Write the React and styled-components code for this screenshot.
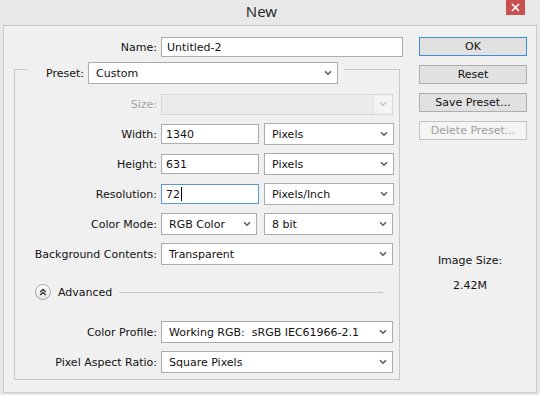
import React from "react";
import styled, { createGlobalStyle } from "styled-components";

const Global = createGlobalStyle`
  html, body { margin: 0; padding: 0; }
  body { background: #e8e8e8; }
`;

const FONT = `"DejaVu Sans", Verdana, sans-serif`;

const Window = styled.div`
  width: 540px;
  height: 395px;
  background: #e8e8e8;
  display: flex;
  flex-direction: column;
  font-family: ${FONT};
  font-size: 11px;
  color: #111;
  overflow: hidden;
`;

const TitleBar = styled.div`
  height: 25px;
  flex: none;
  display: grid;
  grid-template-columns: 1fr auto 1fr;
  align-items: start;
`;

const Title = styled.div`
  grid-column: 2;
  padding-right: 17px;
  font-family: "Noto Sans", sans-serif;
  font-size: 15px;
  line-height: 22px;
  color: #2b2b2b;
`;

const CloseButton = styled.div`
  grid-column: 3;
  justify-self: end;
  width: 19px;
  height: 15px;
  margin-right: 15px;
  background: #c75050;
  display: flex;
  align-items: center;
  justify-content: center;
`;

const Body = styled.div`
  flex: 1;
  margin: 0 3px 2px 3px;
  border: 1px solid #c9c9c9;
  background: #f0f0f0;
  display: grid;
  grid-template-columns: 399px 1fr;
`;

const LeftCol = styled.div`
  padding-top: 11px;
  display: flex;
  flex-direction: column;
`;

const NameRow = styled.div`
  display: grid;
  grid-template-columns: 153px 242px;
  column-gap: 4px;
  align-items: center;
  height: 20px;
`;

const Label = styled.div`
  text-align: right;
  white-space: nowrap;
  color: ${(p) => (p.$disabled ? "#a3a3a3" : "#111")};
`;

const TextField = styled.div`
  box-sizing: border-box;
  height: 20px;
  width: ${(p) => p.$w || "100%"};
  border: 1px solid ${(p) => (p.$focused ? "#5a9ad8" : "#acacac")};
  background: #fff;
  padding-left: ${(p) => p.$pad || 4}px;
  display: flex;
  align-items: center;
  white-space: nowrap;
`;

const Caret = styled.span`
  display: inline-block;
  width: 1px;
  height: 14px;
  background: #000;
  margin-left: 1px;
`;

const SelectBox = styled.div`
  box-sizing: border-box;
  height: ${(p) => p.$h || 22}px;
  width: ${(p) => p.$w || "100%"};
  border: 1px solid ${(p) => (p.$disabled ? "#d6d6d6" : "#acacac")};
  background: ${(p) => (p.$disabled ? "#ebebeb" : "#fff")};
  display: flex;
  align-items: center;
  padding-left: 7px;
  white-space: nowrap;
`;

const SelectText = styled.div`
  flex: 1;
  overflow: hidden;
`;

const ArrowArea = styled.div`
  width: 18px;
  align-self: stretch;
  display: flex;
  align-items: center;
  justify-content: center;
  background: ${(p) => (p.$disabled ? "#f4f4f4" : "transparent")};
  border-left: ${(p) => (p.$disabled ? "1px solid #e2e2e2" : "none")};
`;

const Chevron = ({ color = "#5c5c5c" }) => (
  <svg width="8" height="6" viewBox="0 0 8 6">
    <path d="M1 1.2 L4 4.2 L7 1.2" fill="none" stroke={color} strokeWidth="1.6" />
  </svg>
);

const Select = ({ children, w, h, disabled }) => (
  <SelectBox $w={w} $h={h} $disabled={disabled}>
    <SelectText>{children}</SelectText>
    <ArrowArea $disabled={disabled}>
      <Chevron color={disabled ? "#c4c4c4" : "#5c5c5c"} />
    </ArrowArea>
  </SelectBox>
);

const Group = styled.div`
  box-sizing: border-box;
  margin: 12px 0 0 10px;
  width: 386px;
  height: 311px;
  border: 1px solid #c8c8c8;
  display: flex;
  flex-direction: column;
  padding: 0 6px 0 0;
`;

const GroupHeader = styled.div`
  align-self: flex-start;
  margin: -8px 0 0 12px;
  padding: 0 6px 0 19px;
  background: #f0f0f0;
  display: flex;
  align-items: center;
  gap: 4px;
`;

const Rows = styled.div`
  display: flex;
  flex-direction: column;
  gap: 8px;
  margin-top: ${(p) => p.$top || 0}px;
`;

const Row = styled.div`
  display: grid;
  grid-template-columns: 142px 1fr;
  column-gap: 4px;
  align-items: center;
  height: 22px;
`;

const Pair = styled.div`
  display: flex;
  align-items: center;
  gap: ${(p) => p.$gap || 5}px;
`;

const AdvancedRow = styled.div`
  display: flex;
  align-items: center;
  height: 20px;
  margin: 17px 10px 0 20px;
`;

const AdvancedIcon = styled.div`
  width: 14px;
  height: 14px;
  border-radius: 50%;
  border: 1px solid #a9a9a9;
  background: linear-gradient(#ffffff, #e4e4e4);
  display: flex;
  align-items: center;
  justify-content: center;
`;

const AdvancedText = styled.div`
  margin-left: 7px;
`;

const Rule = styled.div`
  flex: 1;
  height: 1px;
  background: #c8c8c8;
  margin-left: 7px;
`;

const RightCol = styled.div`
  padding: 11px 0 0 16px;
  display: flex;
  flex-direction: column;
  gap: 9px;
`;

const Button = styled.div`
  box-sizing: border-box;
  width: 108px;
  height: 19px;
  display: flex;
  align-items: center;
  justify-content: center;
  background: ${(p) => (p.$disabled ? "#f4f4f4" : "#e1e1e1")};
  border: 1px solid
    ${(p) => (p.$default ? "#3c8ee0" : p.$disabled ? "#c4c4c4" : "#adadad")};
  color: ${(p) => (p.$disabled ? "#a0a0a0" : "#111")};
`;

const ImageSize = styled.div`
  width: 108px;
  margin-top: 105px;
  padding-right: 6px;
  box-sizing: border-box;
  text-align: center;
  display: flex;
  flex-direction: column;
  gap: 11px;
  line-height: 14px;
`;

export default function App() {
  return (
    <>
      <Global />
      <Window>
        <TitleBar>
          <Title>New</Title>
          <CloseButton>
            <svg width="9" height="9" viewBox="0 0 9 9">
              <path d="M1 1 L8 8 M8 1 L1 8" stroke="#fff" strokeWidth="1.6" />
            </svg>
          </CloseButton>
        </TitleBar>
        <Body>
          <LeftCol>
            <NameRow>
              <Label>Name:</Label>
              <TextField $pad={5}>Untitled-2</TextField>
            </NameRow>
            <Group>
              <GroupHeader>
                <Label>Preset:</Label>
                <Select w="250px">Custom</Select>
              </GroupHeader>
              <Rows $top={9}>
                <Row>
                  <Label $disabled>Size:</Label>
                  <Select w="232px" h={21} disabled />
                </Row>
                <Row>
                  <Label>Width:</Label>
                  <Pair>
                    <TextField $w="98px">1340</TextField>
                    <Select w="130px">Pixels</Select>
                  </Pair>
                </Row>
                <Row>
                  <Label>Height:</Label>
                  <Pair>
                    <TextField $w="98px">631</TextField>
                    <Select w="130px">Pixels</Select>
                  </Pair>
                </Row>
                <Row>
                  <Label>Resolution:</Label>
                  <Pair>
                    <TextField $w="98px" $focused>
                      72
                      <Caret />
                    </TextField>
                    <Select w="130px">Pixels/Inch</Select>
                  </Pair>
                </Row>
                <Row>
                  <Label>Color Mode:</Label>
                  <Pair $gap={7}>
                    <Select w="96px">RGB Color</Select>
                    <Select w="129px">8 bit</Select>
                  </Pair>
                </Row>
                <Row>
                  <Label>Background Contents:</Label>
                  <Select w="232px">Transparent</Select>
                </Row>
              </Rows>
              <AdvancedRow>
                <AdvancedIcon>
                  <svg width="8" height="8" viewBox="0 0 8 8">
                    <path
                      d="M1.2 4 L4 1.4 L6.8 4 M1.2 7 L4 4.4 L6.8 7"
                      fill="none"
                      stroke="#333"
                      strokeWidth="1.3"
                    />
                  </svg>
                </AdvancedIcon>
                <AdvancedText>Advanced</AdvancedText>
                <Rule />
              </AdvancedRow>
              <Rows $top={19}>
                <Row>
                  <Label>Color Profile:</Label>
                  <Select w="232px">Working RGB:&nbsp; sRGB IEC61966-2.1</Select>
                </Row>
                <Row>
                  <Label>Pixel Aspect Ratio:</Label>
                  <Select w="232px">Square Pixels</Select>
                </Row>
              </Rows>
            </Group>
          </LeftCol>
          <RightCol>
            <Button $default>OK</Button>
            <Button>Reset</Button>
            <Button>Save Preset...</Button>
            <Button $disabled>Delete Preset...</Button>
            <ImageSize>
              <div>Image Size:</div>
              <div>2.42M</div>
            </ImageSize>
          </RightCol>
        </Body>
      </Window>
    </>
  );
}
